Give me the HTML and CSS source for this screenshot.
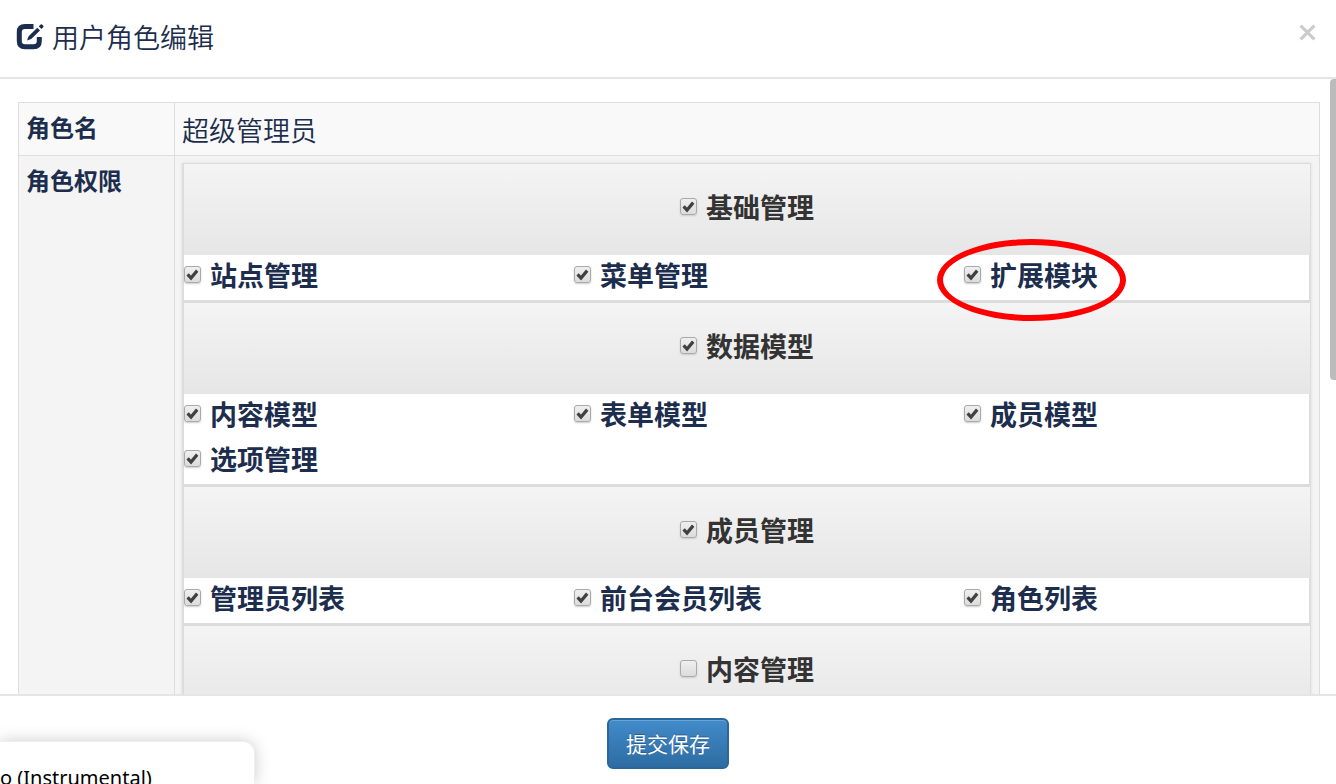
FILE: index.html
```html
<!DOCTYPE html>
<html lang="zh-CN">
<head>
<meta charset="utf-8">
<title>用户角色编辑</title>
<link rel="stylesheet" href="styles.css">
</head>
<body>
<form class="modal">
  <header class="modal-header">
    <svg class="edit-icon" viewBox="0 0 28 28" aria-hidden="true">
      <path class="edit-frame" d="M17.5 3.5H9Q3.3 3.5 3.3 9V18Q3.3 23.7 9 23.7H17.5Q23.3 23.7 23.3 18V14"/>
      <path class="edit-pen" d="M11 17.6 12.6 13.2 21.3 4.8 24 7.4 15.2 16ZM22.8 3.5 24.4 1.7Q25.3 .9 26.1 1.6L27.3 2.7Q28 3.5 27.2 4.3L25.5 6Z"/>
    </svg>
    <h1 class="modal-title">用户角色编辑</h1>
    <button class="close" type="button" aria-label="关闭">
      <svg viewBox="0 0 16 16" aria-hidden="true"><path d="M1.5 1.5 14.5 14.5M14.5 1.5 1.5 14.5"/></svg>
    </button>
  </header>

  <div class="modal-body">
    <div class="scroll-area">
      <table class="detail">
        <tbody>
          <tr class="row-name"><th scope="row">角色名</th><td>超级管理员</td></tr>
          <tr class="row-rights">
            <th scope="row">角色权限</th>
            <td>
              <div class="panel">
                <section class="group">
                  <h2 class="group-head"><label class="check"><input type="checkbox" checked>基础管理</label></h2>
                  <div class="group-items">
                    <label class="check"><input type="checkbox" checked>站点管理</label>
                    <label class="check"><input type="checkbox" checked>菜单管理</label>
                    <label class="check marked"><input type="checkbox" checked>扩展模块</label>
                  </div>
                </section>
                <section class="group">
                  <h2 class="group-head"><label class="check"><input type="checkbox" checked>数据模型</label></h2>
                  <div class="group-items">
                    <label class="check"><input type="checkbox" checked>内容模型</label>
                    <label class="check"><input type="checkbox" checked>表单模型</label>
                    <label class="check"><input type="checkbox" checked>成员模型</label>
                    <label class="check"><input type="checkbox" checked>选项管理</label>
                  </div>
                </section>
                <section class="group">
                  <h2 class="group-head"><label class="check"><input type="checkbox" checked>成员管理</label></h2>
                  <div class="group-items">
                    <label class="check"><input type="checkbox" checked>管理员列表</label>
                    <label class="check"><input type="checkbox" checked>前台会员列表</label>
                    <label class="check"><input type="checkbox" checked>角色列表</label>
                  </div>
                </section>
                <section class="group">
                  <h2 class="group-head"><label class="check"><input type="checkbox">内容管理</label></h2>
                </section>
              </div>
            </td>
          </tr>
        </tbody>
      </table>
    </div>
    <div class="scroll-thumb"></div>
  </div>

  <footer class="modal-footer">
    <button class="submit" type="submit">提交保存</button>
  </footer>
</form>
<aside class="toast">o (Instrumental)</aside>
</body>
</html>
```
FILE: styles.css
```css
*,
*::after { box-sizing: border-box; }

body {
  margin: 0;
  overflow: hidden;
  background: #fff;
  color: #1c2d4d;
  font-family: "Noto Sans CJK SC", "Noto Sans", sans-serif;
  font-size: 27px;
}

.modal {
  display: flex;
  flex-direction: column;
  height: 100vh;
}

.modal-header {
  display: flex;
  align-items: center;
  gap: 8px;
  padding: 17px 20px 21px 16px;
  border-bottom: 2px solid #e5e5e5;
}

.edit-icon {
  width: 28px;
  height: 28px;
}

.edit-frame {
  fill: none;
  stroke: #1c2d4d;
  stroke-width: 5;
}

.edit-pen {
  fill: #1c2d4d;
  stroke: #fff;
  stroke-width: 2;
  paint-order: stroke;
}

.modal-title {
  flex: 1;
  margin: 0;
  font-size: 27px;
  font-weight: 350;
  line-height: 39px;
}

.close {
  align-self: flex-start;
  width: 17px;
  height: 17px;
  margin-top: 7px;
  padding: 0;
  border: 0;
  background: none;
}

.close svg {
  display: block;
  fill: none;
  stroke: #ccc;
  stroke-width: 3;
}

.modal-body {
  position: relative;
  flex: 1;
  min-height: 0;
}

.scroll-area {
  height: 100%;
  padding: 23px 16px 0 18px;
  overflow-y: auto;
  scrollbar-width: none;
}

.scroll-thumb {
  position: absolute;
  top: 0;
  right: 0;
  width: 6px;
  height: 49%;
  border-radius: 4px 0 0 4px;
  background: #bbb;
}

.detail {
  width: 100%;
  border-collapse: collapse;
}

.detail th,
.detail td {
  padding: 7px;
  border: 1px solid #ddd;
  text-align: left;
  vertical-align: top;
}

.detail th {
  width: 156px;
  font-size: 24px;
  font-weight: 700;
  line-height: 34px;
}

.detail td {
  font-weight: 350;
  line-height: 38px;
}

.detail .row-name td { padding: 8px 7px 6px; }

.row-name { background: #f9f9f9; }
.row-rights { background: #f4f4f4; }

.panel {
  margin-right: 1px;
  border: solid #ddd;
  border-width: 1px 1px 0 2px;
  box-shadow: 0 0 3px #ddd;
}

.group { border-bottom: 3px solid #dcdcdc; }

.group-head {
  display: flex;
  align-items: center;
  justify-content: center;
  height: 91px;
  margin: 0;
  background: linear-gradient(#f4f4f4, #e6e6e6);
  color: #333;
  font-size: 27px;
}

.group-items {
  display: grid;
  grid-template-columns: repeat(3, 1fr);
  column-gap: 45px;
  border-right: 1px solid #ddd;
  background: #fff;
}

.check {
  display: flex;
  align-items: center;
  gap: 9px;
  padding-bottom: 5px;
  font-weight: 700;
  line-height: 40px;
}

.check input {
  appearance: none;
  width: 17px;
  height: 17px;
  margin: 0 0 2px;
  border: 1px solid #aaa;
  border-radius: 3px;
  background: linear-gradient(#efefef, #dcdcdc);
  box-shadow: 0 1px 2px #ccc;
}

.check input:checked {
  background:
    url("data:image/svg+xml,%3Csvg xmlns='http://www.w3.org/2000/svg' viewBox='0 0 15 15'%3E%3Cpath d='M2.6 7.4L6 11L12.2 3.6' fill='none' stroke='%23404040' stroke-width='3.2'/%3E%3C/svg%3E") center / 15px no-repeat,
    linear-gradient(#efefef, #dcdcdc);
}

.marked { position: relative; }

.marked::after {
  position: absolute;
  top: -16px;
  left: -27px;
  width: 189px;
  height: 82px;
  border: 6px solid #f00;
  border-radius: 50%;
  content: "";
  pointer-events: none;
}

.modal-footer {
  display: flex;
  justify-content: center;
  padding: 22px 0 15px;
  border-top: 2px solid #e5e5e5;
}

.submit {
  padding: 8px 17px;
  border: 2px solid #2b669a;
  border-radius: 6px;
  background: linear-gradient(#428bca, #2d6ca2);
  box-shadow: inset 0 1px 0 #6ba3d5;
  color: #fff;
  font-family: inherit;
  font-size: 21px;
  line-height: 31px;
  text-shadow: 0 -1px 0 #2b5f90;
}

.toast {
  position: absolute;
  bottom: 0;
  left: 0;
  width: 255px;
  height: 43px;
  padding-top: 22px;
  border: solid #eee;
  border-width: 1px 1px 0 0;
  border-radius: 0 12px 0 0;
  background: #fff;
  box-shadow: 0 0 16px #ccc;
  color: #000;
  font-family: "Noto Sans", sans-serif;
  font-size: 20px;
  line-height: 28px;
}
```
